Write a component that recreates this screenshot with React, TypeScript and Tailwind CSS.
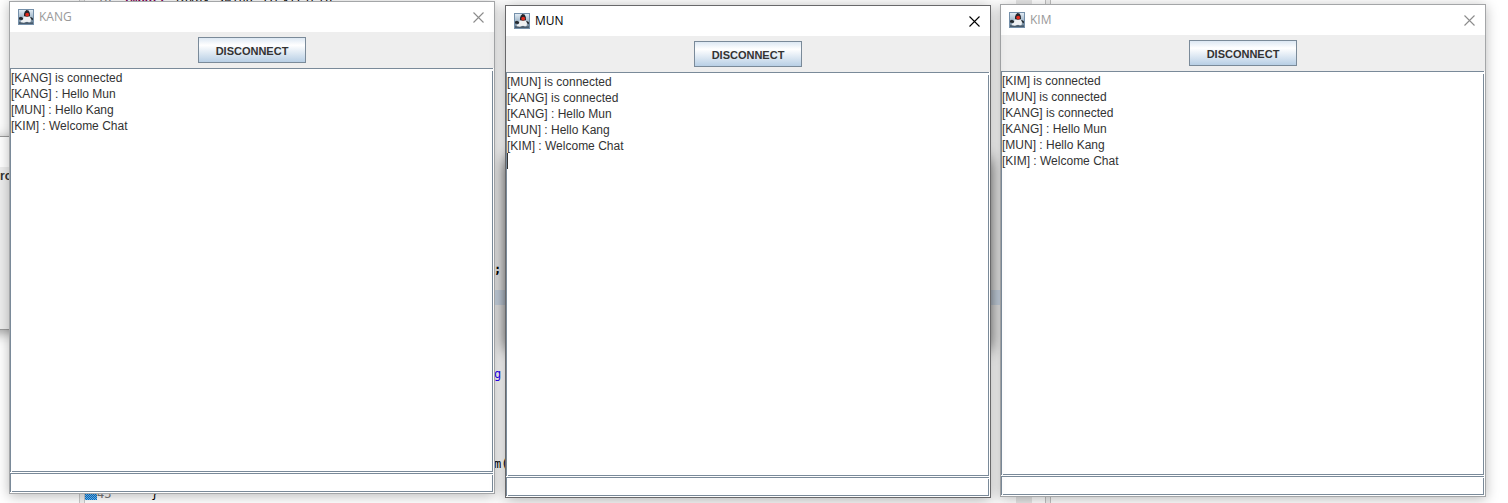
type ChatWindow = {
  name: string;
  lines: string[];
  place: string;
  active?: boolean;
};

const windows: ChatWindow[] = [
  {
    name: "KANG",
    lines: ["[KANG] is connected", "[KANG] : Hello Mun", "[MUN] : Hello Kang", "[KIM] : Welcome Chat"],
    place: "left-[9px] top-px",
  },
  {
    name: "KIM",
    lines: [
      "[KIM] is connected",
      "[MUN] is connected",
      "[KANG] is connected",
      "[KANG] : Hello Mun",
      "[MUN] : Hello Kang",
      "[KIM] : Welcome Chat",
    ],
    place: "left-[1000px] top-1",
  },
  {
    name: "MUN",
    lines: [
      "[MUN] is connected",
      "[KANG] is connected",
      "[KANG] : Hello Mun",
      "[MUN] : Hello Kang",
      "[KIM] : Welcome Chat",
    ],
    place: "left-[505px] top-[5px]",
    active: true,
  },
];

function JavaIcon() {
  return (
    <svg viewBox="0 0 16 16" className="h-4 w-4 shrink-0" aria-hidden="true">
      <defs>
        <linearGradient id="duke-bg" x1="0" y1="0" x2="0" y2="1">
          <stop offset="0" stopColor="#e0eaf3" />
          <stop offset="0.55" stopColor="#9fb5c8" />
          <stop offset="1" stopColor="#5f7588" />
        </linearGradient>
      </defs>
      <rect width="16" height="16" fill="#7590aa" />
      <rect x="1" y="1" width="14" height="14" fill="url(#duke-bg)" />
      <path d="M5 9.5 6 7 11.8 7.2 13 10 12.6 13 11 13.6 9 12.8 6 13.8 3 13.6 2.6 12 4.4 11Z" fill="#eef0f2" />
      <path d="M1 8.6 3 7.8 5.2 9 5 10.6 3.4 11 1 10.4Z" fill="#252b31" />
      <path d="M12 8 14 8.4 15 9.6 14.8 11.4 13.4 10.6Z" fill="#252b31" />
      <path d="M8.4 1 10.6 1.6 11.8 4 12 7.2 9 7.8 6 7.2 6 4.6 7 2.4Z" fill="#22242a" />
      <circle cx="9.2" cy="5.6" r="1.9" fill="#e32a1c" />
      <path d="M1 13 3 13.6 6 14 9 13 11 13.8 15 13.2V15H1Z" fill="#4a5c6d" />
    </svg>
  );
}

function Frame({ name, lines, place, active }: ChatWindow) {
  return (
    <section
      aria-label={name}
      className={`absolute flex h-[493px] w-[486px] flex-col border bg-white ${place} ${
        active
          ? "border-[#68686a] shadow-[0_2px_14px_rgba(0,0,0,0.32)]"
          : "border-[#a4a6a8] shadow-[0_2px_12px_rgba(0,0,0,0.28)]"
      }`}
    >
      <header className="flex h-[30px] shrink-0 items-center gap-[5px] pl-2 pr-2.5">
        <JavaIcon />
        <h2
          className={`flex-1 font-['Open_Sans',sans-serif] text-xs ${
            active ? "text-black" : "text-[#999]"
          }`}
        >
          {name}
        </h2>
        <button type="button" aria-label="Close" className={active ? "text-black" : "text-[#8c8c8c]"}>
          <svg viewBox="0 0 11 11" className="h-[11px] w-[11px]" aria-hidden="true">
            <path d="M.5.5 10.5 10.5M10.5.5.5 10.5" stroke="currentColor" strokeWidth="1.1" />
          </svg>
        </button>
      </header>
      <div className="flex h-9 shrink-0 items-center justify-center bg-[#eee] font-['Liberation_Sans',Arial,sans-serif]">
        <button
          type="button"
          className="h-[26px] w-[108px] border border-[#7a8a99] bg-linear-to-b from-[#dde8f3] via-white via-30% to-[#b8cfe5] pt-0.5 text-[11px] font-bold text-[#333]"
        >
          DISCONNECT
        </button>
      </div>
      <div className="relative flex-1 pb-px pr-px before:absolute before:right-px before:top-px before:h-0.5 before:w-px before:bg-white after:absolute after:bottom-px after:left-px after:h-px after:w-px after:bg-white">
        <textarea
          aria-label={`${name} messages`}
          readOnly
          value={lines.join("\n")}
          className="block h-full w-full resize-none border border-[#7a8a99] bg-white pt-px font-['Liberation_Sans',Arial,sans-serif] text-xs leading-4 text-[#333] outline-none"
        />
        {active && <span className="absolute left-px top-[81px] h-4 w-px bg-[#333]" />}
      </div>
      <div className="relative h-5 shrink-0 pb-px pr-px before:absolute before:right-px before:top-px before:h-px before:w-px before:bg-white after:absolute after:bottom-px after:left-px after:h-px after:w-px after:bg-white">
        <input
          type="text"
          aria-label={`${name} message`}
          className="block h-full w-full border border-[#7a8a99] bg-white px-0.5 font-['Liberation_Sans',Arial,sans-serif] text-xs text-[#333] outline-none"
        />
      </div>
    </section>
  );
}

const codeRows = Array.from({ length: 34 }, (_, i) => i + 10);

function CodeRow({ line }: { line: number }) {
  switch (line) {
    case 10:
      return (
        <>
          <b className="text-[#7f0055]">import</b> javax.swing.JTextField;
        </>
      );
    case 28:
      return <b className="pl-[371px]">;</b>;
    case 35:
      return <span className="pl-[371px] text-[#2a00ff]">g</span>;
    case 41:
      return <span className="pl-[371px]">m(</span>;
    case 43:
      return <span className="pl-7">{"}"}</span>;
    default:
      return null;
  }
}

function EditorBackdrop() {
  return (
    <div className="absolute inset-0 flex overflow-hidden pl-[79px] font-['DejaVu_Sans_Mono',monospace] text-xs leading-[19px]">
      <div className="w-1.5 shrink-0 border-x border-[#c8c8c8] bg-[#f0f0f0]" />
      <div className="-mt-2.5 w-[931px] shrink-0">
        {codeRows.map((line) => (
          <div key={line} className={`flex h-[15px] ${line === 30 ? "bg-[#e0edfc]" : ""}`}>
            <span
              className={`w-3 shrink-0 ${
                line === 43 ? "bg-[repeating-conic-gradient(#0078d7_0_25%,#7dbcf0_0_50%)] bg-size-[2px_2px]" : ""
              }`}
            />
            <span className="w-[26px] shrink-0 text-[#787878]">{line === 10 || line === 43 ? line : ""}</span>
            <code className="whitespace-pre font-['DejaVu_Sans_Mono',monospace] text-black">
              <CodeRow line={line} />
            </code>
          </div>
        ))}
      </div>
      <div className="w-4 shrink-0 bg-[#e6e6e6]" />
      <div className="ml-[13px] w-1.5 shrink-0 border-x border-[#c0c0c0] bg-[#f0f0f0]" />
    </div>
  );
}

function BackgroundDialogs() {
  return (
    <>
      <div className="absolute left-[-200px] top-[136px] h-[194px] w-[260px] border border-[#999] bg-[#eee] pl-[199px] shadow-[0_3px_12px_rgba(0,0,0,0.4)]">
        <div className="-ml-[199px] h-[30px] bg-white" />
        <p className="font-['Liberation_Sans',Arial,sans-serif] text-xs font-bold leading-[18px] text-[#333]">ro</p>
      </div>
      <div className="absolute left-[505px] top-[157px] h-[190px] w-[486px] bg-[#555] shadow-[0_2px_14px_rgba(0,0,0,0.6)]" />
    </>
  );
}

export default function App() {
  return (
    <main className="relative min-h-screen overflow-hidden bg-white">
      <EditorBackdrop />
      <BackgroundDialogs />
      {windows.map((w) => (
        <Frame key={w.name} {...w} />
      ))}
    </main>
  );
}
